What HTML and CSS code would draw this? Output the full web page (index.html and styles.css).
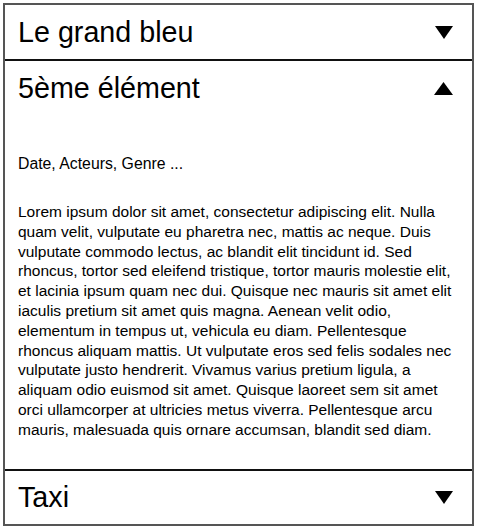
FILE: index.html
```html
<!DOCTYPE html>
<html lang="fr">
<head>
<meta charset="utf-8">
<title>Films</title>
<link rel="stylesheet" href="styles.css">
</head>
<body>
<div class="accordion">
  <div class="item">
    <div class="header">
      <span class="title">Le grand bleu</span>
      <svg class="arrow" width="18" height="13" viewBox="0 0 18 13"><polygon points="0,0 18,0 9,13" fill="#000"/></svg>
    </div>
  </div>
  <div class="item open">
    <div class="header">
      <span class="title">5ème élément</span>
      <svg class="arrow" width="19" height="13" viewBox="0 0 19 13"><polygon points="0,13 19,13 9.5,0" fill="#000"/></svg>
    </div>
    <div class="body">
      <p class="meta">Date, Acteurs, Genre ...</p>
      <p class="text">Lorem ipsum dolor sit amet, consectetur adipiscing elit. Nulla quam velit, vulputate eu pharetra nec, mattis ac neque. Duis vulputate commodo lectus, ac blandit elit tincidunt id. Sed rhoncus, tortor sed eleifend tristique, tortor mauris molestie elit, et lacinia ipsum quam nec dui. Quisque nec mauris sit amet elit iaculis pretium sit amet quis magna. Aenean velit odio, elementum in tempus ut, vehicula eu diam. Pellentesque rhoncus aliquam mattis. Ut vulputate eros sed felis sodales nec vulputate justo hendrerit. Vivamus varius pretium ligula, a aliquam odio euismod sit amet. Quisque laoreet sem sit amet orci ullamcorper at ultricies metus viverra. Pellentesque arcu mauris, malesuada quis ornare accumsan, blandit sed diam.</p>
    </div>
  </div>
  <div class="item">
    <div class="header">
      <span class="title">Taxi</span>
      <svg class="arrow" width="18" height="13" viewBox="0 0 18 13"><polygon points="0,0 18,0 9,13" fill="#000"/></svg>
    </div>
  </div>
</div>
</body>
</html>
```

FILE: styles.css
```css
html, body {
  margin: 0;
  padding: 0;
  background: #fff;
}
body {
  padding: 3px 3px 0 3px;
  font-family: "Liberation Sans", Arial, sans-serif;
  color: #000;
}
.accordion {
  width: 467px;
  border: 2px solid #555;
  box-sizing: content-box;
}
.item + .item {
  border-top: 2px solid #111;
}
.header {
  height: 54px;
  display: flex;
  align-items: center;
  justify-content: space-between;
  padding: 0 19px 0 13px;
}
.title {
  font-size: 28.7px;
  line-height: 32px;
}
.arrow {
  display: block;
}
.body {
  padding: 41px 6px 29px 13px;
}
.meta {
  margin: 0;
  font-size: 15.8px;
  line-height: 16px;
}
.text {
  margin: 30px 0 0 0;
  font-size: 15.5px;
  line-height: 19.8px;
}
.item:last-child .header {
  height: 53px;
}
```
